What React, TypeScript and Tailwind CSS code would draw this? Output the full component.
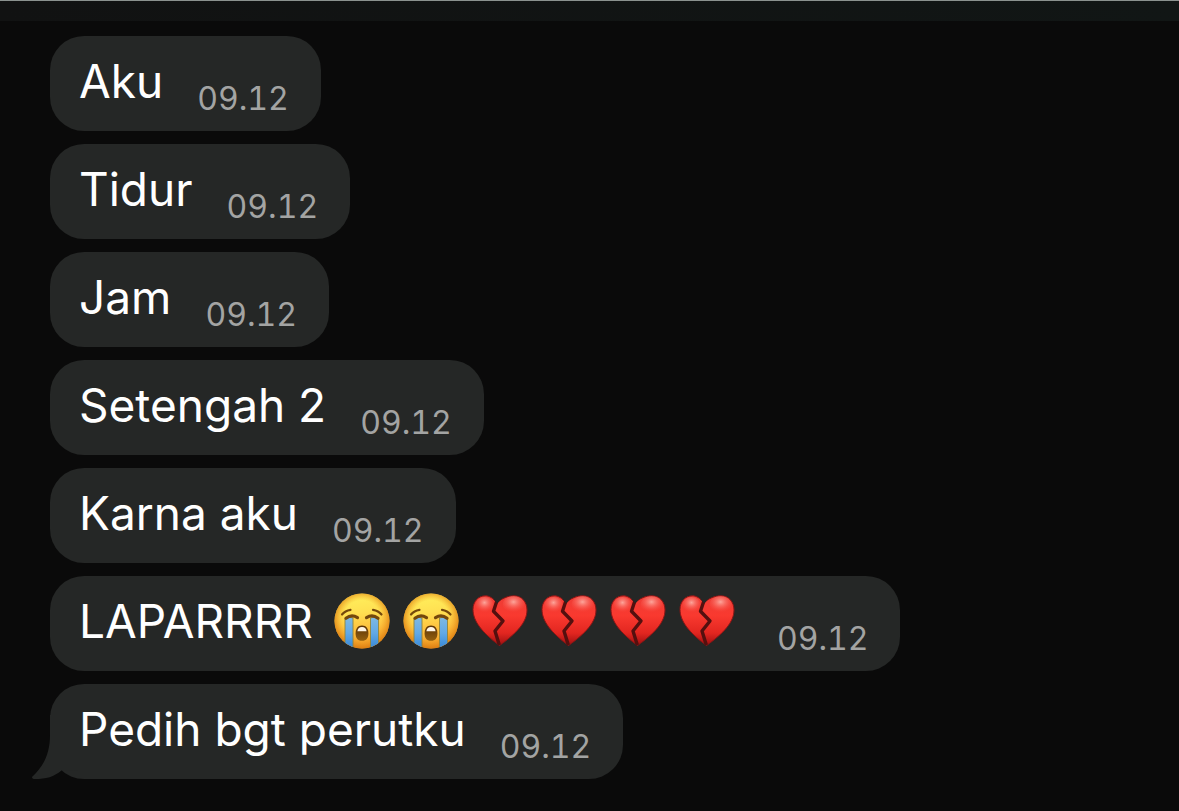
import React from 'react';

interface Message {
  id: number;
  text: string;
  time: string;
  emojis?: Array<'sob' | 'broken-heart'>;
}

const messages: Message[] = [
  { id: 1, text: 'Aku', time: '09.12' },
  { id: 2, text: 'Tidur', time: '09.12' },
  { id: 3, text: 'Jam', time: '09.12' },
  { id: 4, text: 'Setengah 2', time: '09.12' },
  { id: 5, text: 'Karna aku', time: '09.12' },
  {
    id: 6,
    text: 'LAPARRRR',
    time: '09.12',
    emojis: ['sob', 'sob', 'broken-heart', 'broken-heart', 'broken-heart', 'broken-heart'],
  },
  { id: 7, text: 'Pedih bgt perutku', time: '09.12' },
];

// Gradients and clips shared by every emoji on the page
const EmojiDefs: React.FC = () => (
  <svg className="absolute h-0 w-0" aria-hidden="true">
    <defs>
      <linearGradient id="face" x1="0.4" y1="0" x2="0.55" y2="1">
        <stop offset="0" stopColor="#fff05c" />
        <stop offset="0.35" stopColor="#ffe052" />
        <stop offset="0.7" stopColor="#fdbb3a" />
        <stop offset="1" stopColor="#f09a26" />
      </linearGradient>
      <radialGradient id="faceEdge" cx="0.5" cy="0.47" r="0.53">
        <stop offset="0.65" stopColor="#f09a1c" stopOpacity="0" />
        <stop offset="1" stopColor="#d97a10" stopOpacity="0.9" />
      </radialGradient>
      <linearGradient id="tear" x1="0" y1="0" x2="0" y2="1">
        <stop offset="0" stopColor="#7fb9e2" />
        <stop offset="0.5" stopColor="#62a9e6" />
        <stop offset="1" stopColor="#3486d6" />
      </linearGradient>
      <linearGradient id="mouth" x1="0" y1="0" x2="0" y2="1">
        <stop offset="0" stopColor="#5a3206" />
        <stop offset="1" stopColor="#94600f" />
      </linearGradient>
      <clipPath id="faceClip">
        <circle cx="28" cy="28" r="27.5" />
      </clipPath>
      <linearGradient id="heart" x1="0" y1="0" x2="0" y2="1">
        <stop offset="0" stopColor="#ee3d36" />
        <stop offset="0.4" stopColor="#f9392f" />
        <stop offset="0.75" stopColor="#e22620" />
        <stop offset="1" stopColor="#9c0f10" />
      </linearGradient>
      <radialGradient id="shine" cx="0.5" cy="0.35" r="0.6">
        <stop offset="0" stopColor="#ffb9ae" stopOpacity="0.85" />
        <stop offset="1" stopColor="#ff5a50" stopOpacity="0" />
      </radialGradient>
    </defs>
  </svg>
);

const SobEmoji: React.FC = () => (
  <svg viewBox="0 0 56 56" className="size-14" role="img" aria-label="Loudly crying face">
    <circle cx="28" cy="28" r="27.5" fill="url(#face)" />
    <circle cx="28" cy="28" r="27.5" fill="url(#faceEdge)" />
    <g clipPath="url(#faceClip)">
      <path d="M11 25 Q14.5 23 19 25 V56 H11Z" fill="url(#tear)" stroke="#8f8440" strokeWidth="0.9" />
      <path d="M36.5 25 Q41 23 44.5 25 V56 H36.5Z" fill="url(#tear)" stroke="#8f8440" strokeWidth="0.9" />
    </g>
    <g fill="none" stroke="#74480c" strokeLinecap="round">
      <path d="M8 21.5 Q11 17.6 16.5 16.8" strokeWidth="2.2" />
      <path d="M47.5 21.5 Q44.5 17.6 39 16.8" strokeWidth="2.2" />
      <path d="M12 25.2 Q17.5 21 23.5 24.6" strokeWidth="3.2" />
      <path d="M44 25.2 Q38.5 21 32.5 24.6" strokeWidth="3.2" />
    </g>
    <path
      d="M28 32.5 C32.5 32.5 34.4 36 34.4 40.5 C34.4 45 32.5 47.8 28 47.8 C23.5 47.8 21.6 45 21.6 40.5 C21.6 36 23.5 32.5 28 32.5Z"
      fill="url(#mouth)"
    />
    <path d="M23.4 38.3 C23.7 35.5 25.5 34 28 34 C30.5 34 32.3 35.5 32.6 38.3Z" fill="#fff6e6" />
  </svg>
);

const BrokenHeartEmoji: React.FC = () => (
  <svg viewBox="0 0 56 56" className="size-14" role="img" aria-label="Broken heart">
    <path
      d="M25 10 C21 4.8 17 2.8 13.5 2.8 C6 2.8 1 8.8 1 16.5 C1 28 10 39.5 27.5 52.5 C45 40 55 29 55 17 C55 8.8 49.5 2.8 42 2.8 C35.5 2.8 29.5 5.5 25 10Z"
      fill="url(#heart)"
      stroke="#8e1514"
      strokeWidth="1"
    />
    <ellipse cx="12.5" cy="12" rx="9" ry="8" fill="url(#shine)" />
    <ellipse cx="41.5" cy="11.5" rx="11" ry="8.5" fill="url(#shine)" />
    <path
      d="M25 7.5 L21.5 18.2 L31 28 L23 38 L27.3 52"
      fill="none"
      stroke="#54100f"
      strokeWidth="3.4"
      strokeLinejoin="round"
    />
    <path d="M21.5 6 L29 6 L25.3 10.5Z" fill="#252726" />
  </svg>
);

const BubbleTail: React.FC = () => (
  <svg
    viewBox="0 0 46 64"
    className="absolute bottom-0 -left-[18px] h-16 w-[46px] fill-[#252726]"
    aria-hidden="true"
  >
    <path d="M18 0 V20 C18 38 12 51 0 62 Q0 64 3 64 C14 64 22 62 30 55 L46 56 V0Z" />
  </svg>
);

const MessageBubble: React.FC<{ message: Message; isLast: boolean }> = ({ message, isLast }) => {
  return (
    <li className="relative flex items-end gap-[34px] rounded-[34px] bg-[#252726] pt-[15px] pr-8 pb-3 pl-[29px]">
      {isLast && <BubbleTail />}
      <div className="mb-2 flex items-center gap-[21px] text-[46px] leading-[60px] text-white">
        <p className="relative">{message.text}</p>
        {message.emojis && (
          <span className="mr-2 flex gap-[13px]">
            {message.emojis.map((emoji, index) =>
              emoji === 'sob' ? <SobEmoji key={index} /> : <BrokenHeartEmoji key={index} />
            )}
          </span>
        )}
      </div>
      <time className="text-[32px] leading-[40px] text-[#a3a4a3] tabular-nums">{message.time}</time>
    </li>
  );
};

export default function App() {
  return (
    <div className="flex min-h-screen flex-col border-t border-b border-t-[#8b928f] border-b-[#4a4a4a] bg-[#0a0a0a] font-['Inter',sans-serif]">
      <EmojiDefs />
      <header className="h-5 bg-linear-to-r from-[#111212] to-[#111615]" />
      <main className="flex-1 pt-[15px] pr-8 pb-8 pl-[50px]">
        <ul className="flex flex-col items-start gap-[13px]">
          {messages.map((message, index) => (
            <MessageBubble key={message.id} message={message} isLast={index === messages.length - 1} />
          ))}
        </ul>
      </main>
    </div>
  );
}
